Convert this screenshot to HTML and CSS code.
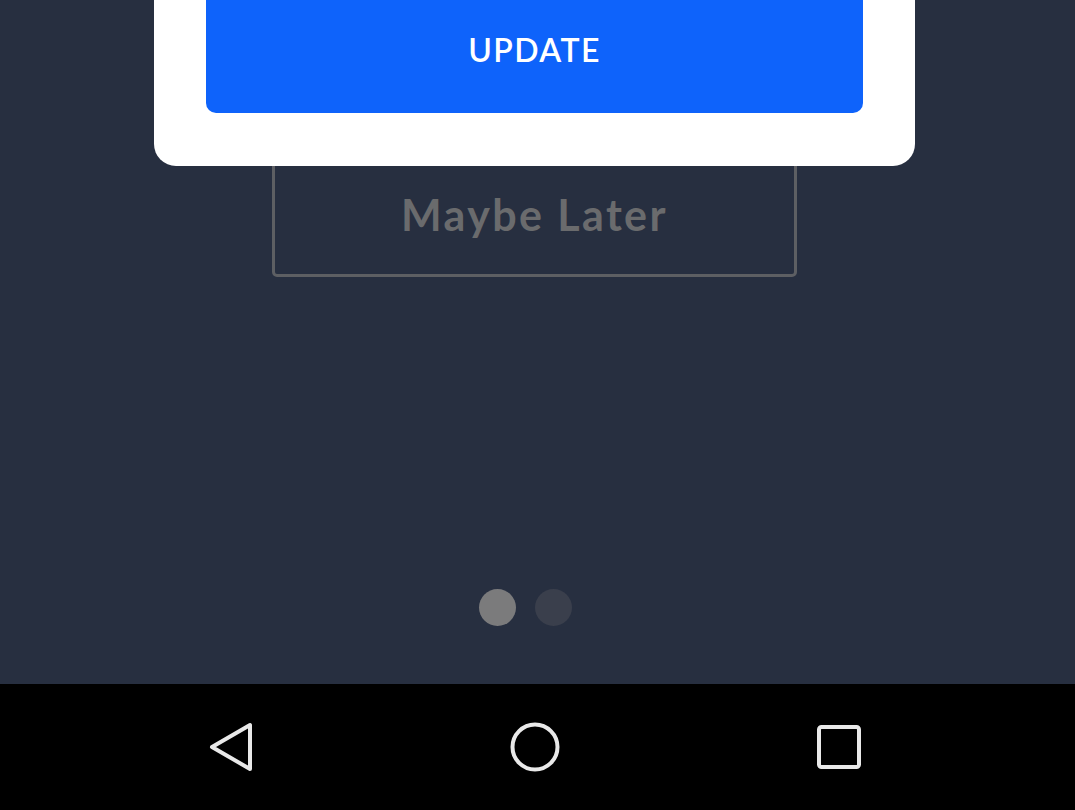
FILE: index.html
```html
<!DOCTYPE html>
<html>
<head>
<meta charset="utf-8">
<link rel="stylesheet" href="styles.css">
</head>
<body>
<div class="screen">
  <main class="main">
    <div class="card">
      <button class="update">UPDATE</button>
    </div>
    <button class="later">Maybe Later</button>
    <div class="dots">
      <span class="dot active"></span>
      <span class="dot"></span>
    </div>
  </main>
  <nav class="navbar">
    <svg class="nav-icon" width="60" height="60" viewBox="0 0 60 60">
      <path d="M49 8 L49 52 L11 30 Z" fill="none" stroke="#e9e9e9" stroke-width="4" stroke-linejoin="round"/>
    </svg>
    <svg class="nav-icon" width="60" height="60" viewBox="0 0 60 60">
      <circle cx="30" cy="30" r="22.5" fill="none" stroke="#e9e9e9" stroke-width="4"/>
    </svg>
    <svg class="nav-icon" width="60" height="60" viewBox="0 0 60 60">
      <rect x="10" y="10" width="40" height="40" rx="2.5" fill="none" stroke="#e9e9e9" stroke-width="4"/>
    </svg>
  </nav>
</div>
</body>
</html>
```

FILE: styles.css
```css
html, body {
  margin: 0;
  padding: 0;
  background: #272f40;
  overflow: hidden;
}

.screen {
  width: 1075px;
  height: 810px;
  display: flex;
  flex-direction: column;
  font-family: "Lato", "Open Sans", sans-serif;
}

.main {
  height: 684px;
  box-sizing: border-box;
  padding-right: 6px;
  background: #272f40;
  display: flex;
  flex-direction: column;
  align-items: center;
}

.card {
  position: relative;
  z-index: 2;
  box-sizing: border-box;
  width: 761px;
  margin-top: -40px;
  padding: 0 52px 53px;
  background: #ffffff;
  border-radius: 22px;
}

.update {
  display: block;
  width: 100%;
  height: 153px;
  padding: 26px 0 0;
  border: none;
  border-radius: 10px;
  background: #0e63fb;
  color: #ffffff;
  font-family: "Lato", sans-serif;
  font-size: 32px;
  font-weight: 600;
  letter-spacing: 1.4px;
}

.later {
  position: relative;
  z-index: 1;
  box-sizing: border-box;
  width: 525px;
  height: 131px;
  margin-top: -20px;
  padding: 6px 0 0;
  background: transparent;
  border: 3px solid #5d5f63;
  border-radius: 5px;
  color: #6a6b6d;
  font-family: "Lato", sans-serif;
  font-size: 43px;
  font-weight: 700;
  letter-spacing: 2.4px;
}

.dots {
  display: flex;
  gap: 19px;
  margin-top: 312px;
  margin-right: 18px;
}

.dot {
  width: 37px;
  height: 37px;
  border-radius: 50%;
  background: #3a3f4c;
}

.dot.active {
  background: #7b7b7c;
}

.navbar {
  height: 126px;
  box-sizing: border-box;
  padding-right: 6px;
  background: #000000;
  display: flex;
  align-items: center;
  justify-content: center;
  gap: 244px;
}

.nav-icon {
  display: block;
  flex: none;
}
```
